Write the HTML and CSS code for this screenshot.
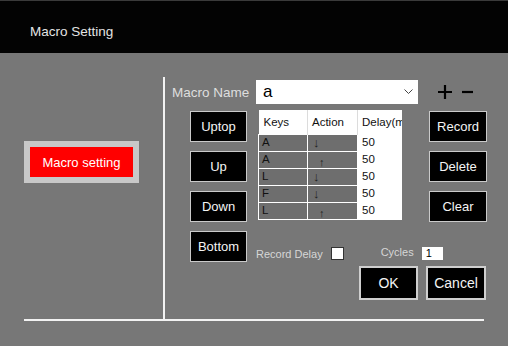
FILE: index.html
```html
<!DOCTYPE html>
<html lang="en">
<head>
    <meta charset="UTF-8">
    <title>Macro Setting</title>
    <link rel="stylesheet" href="styles.css">
</head>
<body>
    <div class="window">
        <div class="titlebar">Macro Setting</div>

        <div class="panel">
            <div class="sidebar">
                <div class="tab-btn"><span>Macro setting</span></div>
            </div>

            <div class="editor">
                <div class="name-row">
                    <span class="label">Macro Name</span>
                    <div class="select">
                        <span>a</span>
                        <svg class="chevron" width="9" height="6" viewBox="0 0 9 6"><polyline points="0.5,0.5 4.5,4.5 8.5,0.5" fill="none" stroke="#444" stroke-width="1"/></svg>
                    </div>
                    <div class="plusminus">
                        <svg width="16" height="16" viewBox="0 0 16 16"><path d="M8 1V15M1 8H15" stroke="#000" stroke-width="2.2"/></svg>
                        <svg width="11" height="16" viewBox="0 0 11 16"><path d="M0 8H11" stroke="#000" stroke-width="2.2"/></svg>
                    </div>
                </div>

                <div class="body-row">
                    <div class="order-btns">
                        <div class="btn">Uptop</div>
                        <div class="btn">Up</div>
                        <div class="btn">Down</div>
                        <div class="btn">Bottom</div>
                    </div>

                    <div class="work">
                        <div class="work-top">
                            <table class="steps">
                                <colgroup><col class="c-key"><col class="c-act"><col class="c-delay"></colgroup>
                                <thead>
                                    <tr><th>Keys</th><th>Action</th><th>Delay(ms)</th></tr>
                                </thead>
                                <tbody>
                                    <tr><td>A</td><td class="down">↓</td><td>50</td></tr>
                                    <tr><td>A</td><td class="up">↑</td><td>50</td></tr>
                                    <tr><td>L</td><td class="down">↓</td><td>50</td></tr>
                                    <tr><td>F</td><td class="down">↓</td><td>50</td></tr>
                                    <tr><td>L</td><td class="up">↑</td><td>50</td></tr>
                                </tbody>
                            </table>

                            <div class="action-btns">
                                <div class="btn">Record</div>
                                <div class="btn">Delete</div>
                                <div class="btn">Clear</div>
                            </div>
                        </div>

                        <div class="options">
                            <span class="opt-label">Record Delay</span>
                            <span class="checkbox"></span>
                            <span class="opt-label cycles">Cycles</span>
                            <span class="cycles-input">1</span>
                        </div>

                        <div class="confirm">
                            <div class="btn big ok">OK</div>
                            <div class="btn big cancel">Cancel</div>
                        </div>
                    </div>
                </div>
            </div>
        </div>
    </div>
</body>
</html>
```

FILE: styles.css
```css
* {
    margin: 0;
    padding: 0;
    box-sizing: border-box;
}

body {
    background: #777777;
    font-family: 'Liberation Sans', Arial, sans-serif;
    width: 508px;
    height: 346px;
    overflow: hidden;
}

.titlebar {
    height: 53px;
    background: #030303;
    border-top: 1px solid #3a3a3a;
    color: #e4e4e4;
    font-size: 13.5px;
    padding: 23px 0 0 30px;
}

.panel {
    display: flex;
    margin: 24px 0 0 24px;
    width: 460px;
    height: 244px;
    border-bottom: 2px solid #f2f2f2;
}

.sidebar {
    flex-shrink: 0;
    width: 141px;
    border-right: 2px solid #f2f2f2;
    padding-top: 64px;
}

.tab-btn {
    width: 115px;
    height: 42px;
    background: #c8c8c8;
    padding: 6px;
}

.tab-btn span {
    display: flex;
    align-items: center;
    justify-content: center;
    height: 100%;
    background: #ff0000;
    color: #fff;
    font-size: 13px;
}

.editor {
    flex-shrink: 0;
    width: 330px;
    padding: 3px 0 0 7px;
}

.name-row {
    display: flex;
    align-items: center;
    height: 24px;
}

.label {
    width: 84px;
    color: #dedede;
    font-size: 13.5px;
}

.select {
    display: flex;
    align-items: center;
    width: 162px;
    height: 24px;
    background: #fff;
    padding-left: 7px;
    font-size: 17px;
    color: #000;
}

.chevron {
    margin-left: auto;
    margin-right: 5px;
}

.plusminus {
    display: flex;
    align-items: center;
    gap: 9px;
    margin-left: 19px;
}

.body-row {
    display: flex;
    margin-top: 7px;
    padding-left: 18px;
}

.order-btns,
.action-btns {
    display: flex;
    flex-direction: column;
    gap: 9px;
}

.btn {
    display: flex;
    align-items: center;
    justify-content: center;
    width: 57px;
    height: 31px;
    background: #000;
    border: 1px solid #cacaca;
    color: #f4f4f4;
    font-size: 13px;
}

.order-btns .btn {
    flex-shrink: 0;
}

.work {
    flex-shrink: 0;
    width: 230px;
    margin-left: 9px;
}

.work-top {
    display: flex;
}

.steps {
    width: 143px;
    height: 109px;
    margin: -1px 0 0 2px;
    border-collapse: collapse;
    table-layout: fixed;
    font-size: 11.5px;
    color: #111;
}

.c-key { width: 49px; }
.c-act { width: 50px; }
.c-delay { width: 44px; }

.steps th {
    height: 24px;
    background: #fff;
    font-weight: normal;
    text-align: left;
    padding-left: 4px;
    border-left: 1px solid #dcdcdc;
    white-space: nowrap;
    overflow: hidden;
}

.steps th:first-child {
    border-left: 0;
    padding-left: 5px;
}

.steps td {
    height: 17px;
    padding-left: 3px;
    background: #6e6e6e;
    border: 1px solid #fff;
    line-height: 1;
}

.steps td:last-child {
    background: #fff;
    padding-left: 4px;
}

.steps td.down {
    padding-left: 5px;
    font-size: 13px;
    color: #222;
}

.steps td.up {
    padding-left: 11px;
    font-size: 11px;
    color: #222;
    vertical-align: bottom;
}

.action-btns {
    margin-left: 27px;
}

.action-btns .btn {
    width: 58px;
}

.options {
    display: flex;
    align-items: center;
    height: 13px;
    margin-top: 25px;
}

.opt-label {
    color: #d6d6d6;
    font-size: 11px;
}

.checkbox {
    width: 13px;
    height: 13px;
    margin-left: 8px;
    background: #fff;
    border: 1px solid #333;
}

.cycles {
    margin-left: 37px;
    margin-top: -3px;
}

.cycles-input {
    width: 21px;
    height: 13px;
    margin-left: 8px;
    background: #fff;
    color: #000;
    font-size: 11px;
    line-height: 13px;
    padding-left: 4px;
}

.confirm {
    display: flex;
    justify-content: flex-end;
    gap: 8px;
    margin-top: 6px;
}

.btn.big {
    height: 34px;
    border: 2px solid #cfcfcf;
    font-size: 14px;
}

.ok { width: 59px; }
.cancel { width: 60px; }
```
